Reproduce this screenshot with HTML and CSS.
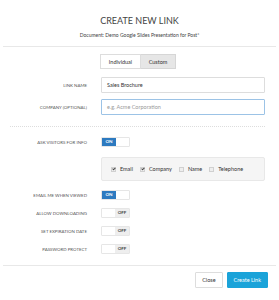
FILE: index.html
```html
<!doctype html>
<html lang="en">

<head>
	<meta charset="UTF-8">
	<title>Create New Link</title>
	<link rel="stylesheet" href="styles.css">
</head>

<body>
	<div class="modal">
		<header class="modal-head">
			<h1>CREATE NEW LINK</h1>
			<p class="doc">Document: Demo Google Slides Presentation for Post*</p>
		</header>
		<div class="modal-body">
			<div class="seg">
				<span class="seg-btn">Individual</span>
				<span class="seg-btn active">Custom</span>
			</div>
			<div class="row">
				<label>LINK NAME</label>
				<div class="field"><span class="input">Sales Brochure</span></div>
			</div>
			<div class="row">
				<label>COMPANY (OPTIONAL)</label>
				<div class="field"><span class="input focus placeholder">e.g. Acme Corporation</span></div>
			</div>
			<div class="dots"></div>
			<div class="row tog-row">
				<label>ASK VISITORS FOR INFO</label>
				<div class="field"><span class="toggle on"><b>ON</b><i></i></span></div>
			</div>
			<div class="row">
				<label></label>
				<div class="field">
					<div class="panel">
						<span class="chk checked"></span><span class="chk-text">Email</span>
						<span class="chk checked"></span><span class="chk-text">Company</span>
						<span class="chk"></span><span class="chk-text">Name</span>
						<span class="chk"></span><span class="chk-text">Telephone</span>
					</div>
				</div>
			</div>
			<div class="row tog-row">
				<label>EMAIL ME WHEN VIEWED</label>
				<div class="field"><span class="toggle on"><b>ON</b><i></i></span></div>
			</div>
			<div class="row tog-row">
				<label>ALLOW DOWNLOADING</label>
				<div class="field"><span class="toggle off"><i></i><b>OFF</b></span></div>
			</div>
			<div class="row tog-row">
				<label>SET EXPIRATION DATE</label>
				<div class="field"><span class="toggle off"><i></i><b>OFF</b></span></div>
			</div>
			<div class="row tog-row">
				<label>PASSWORD PROTECT</label>
				<div class="field"><span class="toggle off"><i></i><b>OFF</b></span></div>
			</div>
		</div>
		<footer class="modal-foot">
			<span class="btn">Close</span>
			<span class="btn primary">Create Link</span>
		</footer>
	</div>
</body>

</html>
```

FILE: styles.css
```css
html,
body {
	margin: 0;
	padding: 0;
	background: #fff;
	font-family: Lato, "Liberation Sans", sans-serif;
	color: #333;
}

.modal {
	width: 279px;
	height: 300px;
}

.modal-head {
	margin: 0 3px;
	padding-top: 15px;
	height: 31px;
	border-bottom: 1px solid #e8e8e8;
	text-align: center;
}

h1 {
	margin: 0;
	font-size: 9px;
	line-height: 11px;
	font-weight: normal;
	color: #444;
}

.doc {
	margin: 6px 0 0;
	font-size: 5px;
	line-height: 7px;
	color: #444;
}

.modal-body {
	padding: 7px 11px 0 0;
	height: 211px;
	border-bottom: 1px solid #e8e8e8;
	margin: 0 3px;
}

.seg {
	display: flex;
	justify-content: center;
	margin-left: 8px;
	margin-bottom: 8px;
}

.seg-btn {
	height: 15px;
	line-height: 15px;
	font-size: 5.5px;
	color: #333;
	border: 1px solid #ddd;
	box-sizing: border-box;
	padding: 0 7px;
	width: 41px;
	text-align: center;
}

.seg-btn.active {
	width: 35px;
	background: #e6e6e6;
	border-color: #d6d6d6;
	border-left: none;
}

.row {
	display: flex;
	align-items: center;
	margin-bottom: 6px;
}

.row label {
	width: 84px;
	flex: none;
	text-align: right;
	font-size: 4.4px;
	color: #555;
	padding-right: 14px;
}

.field {
	flex: 1;
}

.input {
	display: block;
	height: 16px;
	line-height: 14px;
	border: 1px solid #ddd;
	box-sizing: border-box;
	padding: 0 5px;
	font-size: 5.5px;
	color: #333;
	border-radius: 1px;
}

.input.focus {
	border-color: #9cc3e6;
}

.placeholder {
	color: #999;
}

.dots {
	border-top: 1px dotted #ddd;
	margin: 11px 0 10px 7px;
}

.tog-row {
	margin-bottom: 8px;
}

.toggle {
	display: flex;
	width: 29px;
	height: 10px;
	border: 1px solid #e6e6e6;
	box-sizing: border-box;
	border-radius: 1px;
	overflow: hidden;
}

.toggle b {
	width: 14px;
	font-size: 4.5px;
	line-height: 8px;
	text-align: center;
	font-weight: bold;
}

.toggle i {
	flex: 1;
	background: #fff;
}

.toggle.on b {
	background: #2d7ac0;
	color: #fff;
}

.toggle.off b {
	background: #eee;
	color: #444;
}

.panel {
	height: 24px;
	box-sizing: border-box;
	background: #f5f5f5;
	border: 1px solid #e8e8e8;
	border-radius: 2px;
	display: flex;
	align-items: center;
	padding-left: 9px;
	font-size: 5.5px;
	color: #333;
	margin-top: 2px;
	margin-bottom: 3px;
}

.chk {
	width: 3px;
	height: 3px;
	border: 1px solid #d0d0d0;
	background: #eee;
	margin-right: 4px;
	position: relative;
}

.chk.checked::after {
	content: "";
	position: absolute;
	left: 0.8px;
	top: -0.4px;
	width: 0.8px;
	height: 2px;
	border: solid #444;
	border-width: 0 0.8px 0.8px 0;
	transform: rotate(45deg);
}

.chk-text {
	margin-right: 7px;
}

.modal-foot {
	display: flex;
	justify-content: flex-end;
	gap: 4px;
	padding: 6px 11px 0 0;
}

.btn {
	height: 16px;
	line-height: 14px;
	box-sizing: border-box;
	border: 1px solid #ddd;
	font-size: 5.5px;
	padding: 0 6px;
	color: #333;
	border-radius: 1px;
}

.btn.primary {
	background: #1aa3d9;
	border-color: #1aa3d9;
	color: #fff;
}
```
